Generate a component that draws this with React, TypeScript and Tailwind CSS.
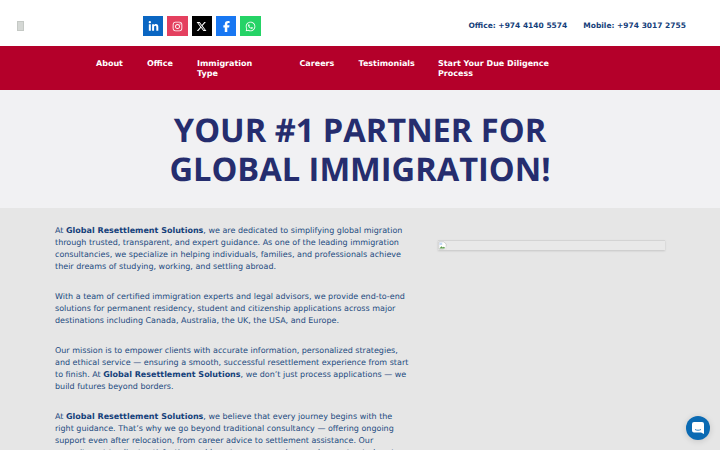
import { FaLinkedinIn, FaInstagram, FaXTwitter, FaFacebookF, FaWhatsapp } from "react-icons/fa6";

const socials = [
  { name: "linkedin", Icon: FaLinkedinIn, bg: "bg-[#0a66c2]" },
  { name: "instagram", Icon: FaInstagram, bg: "bg-[#e4405f]" },
  { name: "x", Icon: FaXTwitter, bg: "bg-black" },
  { name: "facebook", Icon: FaFacebookF, bg: "bg-[#1877f2]" },
  { name: "whatsapp", Icon: FaWhatsapp, bg: "bg-[#25d366]" },
];

const navItems = [
  { label: "About", width: "w-[27px]" },
  { label: "Office", width: "w-[26px]" },
  { label: "Immigration\nType", width: "w-[78.5px]" },
  { label: "Careers", width: "w-[35px]" },
  { label: "Testimonials", width: "w-[55.5px]" },
  { label: "Start Your Due Diligence\nProcess", width: "w-[118px]" },
];

function Org() {
  return <strong className="font-bold text-[#14407a]">Global Resettlement Solutions</strong>;
}

function BrokenImage() {
  return (
    <svg width="9" height="9" viewBox="0 0 16 16" className="shrink-0">
      <path d="M1.5 1.5h9l4 4v9h-13z" fill="#fff" stroke="#b5b5b5" />
      <path d="M2.5 13.5l3.5-4 2.5 2 2-1.5 3 3.5z" fill="#5c9b4b" />
      <path d="M2.5 3h5v4h-5z" fill="#c5d8f5" />
      <path d="M9 16l7-7v7z" fill="#e6e6e6" />
    </svg>
  );
}

export default function App() {
  return (
    <div className="h-[450px] overflow-hidden bg-[#e6e6e6] font-['DejaVu_Sans',sans-serif] [text-rendering:geometricPrecision] relative">
      <header className="h-[46px] bg-white flex items-center pt-[6px] pl-[17px] pr-[34px]">
        <div className="w-[7px] h-[10px] bg-[#d5d8d5] border border-[#c5c9c5]" />
        <div className="ml-[119px] flex gap-[3.9px]">
          {socials.map(({ name, Icon, bg }) => (
            <a key={name} className={`w-[20.4px] h-5 ${bg} flex items-center justify-center text-white text-[11px]`}>
              <Icon />
            </a>
          ))}
        </div>
        <div className="ml-auto flex gap-4 text-[7.5px] font-bold text-[#14407a]">
          <span>Office: +974 4140 5574</span>
          <span>Mobile: +974 3017 2755</span>
        </div>
      </header>

      <nav className="h-[44px] bg-[#b4002a] pl-24 pt-[13px] flex gap-6 items-start text-[8px] leading-[10px] font-bold text-white">
        {navItems.map((item) => (
          <a key={item.label} className={`${item.width} whitespace-pre-line`}>
            {item.label}
          </a>
        ))}
      </nav>

      <section className="h-[118px] bg-[#f1f1f3] flex items-center justify-center">
        <h1 className="font-['Open_Sans',sans-serif] font-bold text-[32.6px] leading-[39px] text-center text-[#252d6e]">
          YOUR #1 PARTNER FOR
          <br />
          GLOBAL IMMIGRATION!
        </h1>
      </section>

      <main className="flex pl-[55px] pt-[17px] pr-[55px] justify-between">
        <div className="w-[355px] flex flex-col gap-[18px] text-[8px] leading-3 text-[#1c4a80]">
          <p>
            At <Org />, we are dedicated to simplifying global migration through trusted, transparent, and expert
            guidance. As one of the leading immigration consultancies, we specialize in helping individuals, families,
            and professionals achieve their dreams of studying, working, and settling abroad.
          </p>
          <p>
            With a team of certified immigration experts and legal advisors, we provide end-to-end solutions for
            permanent residency, student and citizenship applications across major destinations including Canada,
            Australia, the UK, the USA, and Europe.
          </p>
          <p>
            Our mission is to empower clients with accurate information, personalized strategies, and ethical service —
            ensuring a smooth, successful resettlement experience from start to finish. At <Org />, we don’t just
            process applications — we build futures beyond borders.
          </p>
          <p>
            At <Org />, we believe that every journey begins with the right guidance. That’s why we go beyond
            traditional consultancy — offering ongoing support even after relocation, from career advice to settlement
            assistance. Our commitment to client satisfaction and long-term success has made us a trusted partner for
          </p>
        </div>
        <div className="w-[227px] h-[10px] mt-[15px] bg-[#e9e9e9] border-t border-[#d4d4d4] shadow-[0_1px_2px_rgba(0,0,0,0.15)]">
          <BrokenImage />
        </div>
      </main>

      <button className="absolute right-[10px] bottom-[10px] w-6 h-6 rounded-full bg-[#0a6ab3] flex items-center justify-center shadow-[0_1px_6px_rgba(0,0,0,0.15)]">
        <svg width="12" height="12" viewBox="0 0 12 12">
          <path d="M2 0h8a2 2 0 0 1 2 2v10l-3-1.5H2a2 2 0 0 1-2-2V2a2 2 0 0 1 2-2z" fill="#fff" />
          <path d="M3 7.5c2 1 4 1 6 0" stroke="#0a6ab3" strokeWidth=".8" fill="none" />
        </svg>
      </button>
    </div>
  );
}
